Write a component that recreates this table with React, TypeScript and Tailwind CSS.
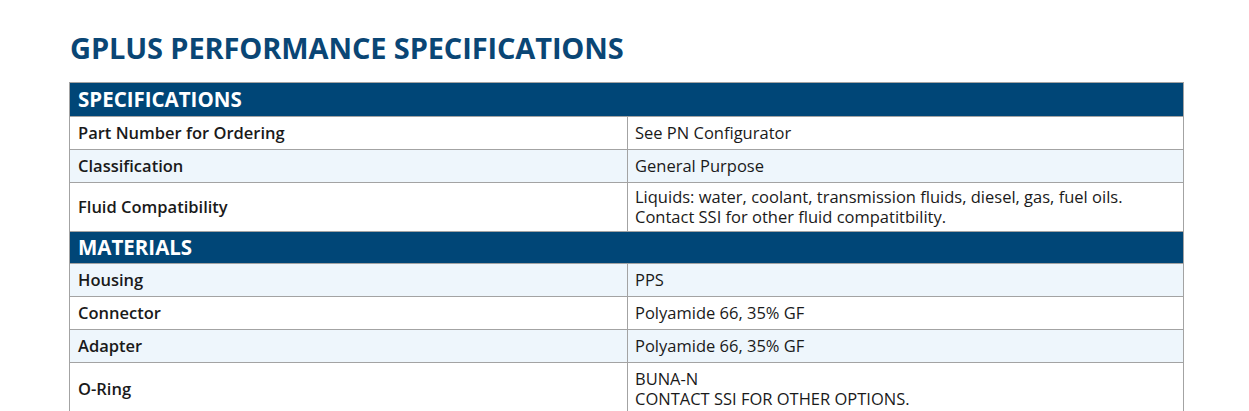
import React from "react";

type Row = { label: string; value: string[]; shaded?: boolean; pad?: string };

const sections: { title: string; bar: string; rows: Row[] }[] = [
  {
    title: "SPECIFICATIONS",
    bar: "h-[34px]",
    rows: [
      { label: "Part Number for Ordering", value: ["See PN Configurator"] },
      { label: "Classification", value: ["General Purpose"], shaded: true },
      {
        label: "Fluid Compatibility",
        value: [
          "Liquids: water, coolant, transmission fluids, diesel, gas, fuel oils.",
          "Contact SSI for other fluid compatitbility.",
        ],
      },
    ],
  },
  {
    title: "MATERIALS",
    bar: "h-[32px]",
    rows: [
      { label: "Housing", value: ["PPS"], shaded: true },
      { label: "Connector", value: ["Polyamide 66, 35% GF"] },
      { label: "Adapter", value: ["Polyamide 66, 35% GF"], shaded: true },
      {
        label: "O-Ring",
        value: ["BUNA-N", "CONTACT SSI FOR OTHER OPTIONS."],
        pad: "pt-[6px] pb-[6px]",
      },
    ],
  },
];

export default function App() {
  return (
    <div
      className="bg-white w-[1249px] h-[411px] overflow-hidden pl-[69px] pt-[30px]"
      style={{ fontFamily: '"Open Sans", "Liberation Sans", sans-serif' }}
    >
      <h1 className="text-[29px] leading-[36px] font-bold text-[#0a4675] tracking-[-0.12px] pl-px">
        GPLUS PERFORMANCE SPECIFICATIONS
      </h1>
      <div className="mt-[16px] w-[1115px] border-l border-r border-[#a3a3a3]">
        {sections.map((section) => (
          <div key={section.title}>
            <div
              className={
                "bg-[#004677] border-t border-[#a3a3a3] flex items-center pl-[8px] " +
                section.bar
              }
            >
              <span className="text-white font-bold text-[20.5px]">
                {section.title}
              </span>
            </div>
            {section.rows.map((row) => (
              <div
                key={row.label}
                className={
                  "grid grid-cols-[557px_1fr] border-t border-[#a3a3a3] text-[16.5px] text-[#1a1a1a] " +
                  (row.shaded ? "bg-[#eef6fc]" : "bg-white")
                }
              >
                <div className="flex items-center px-[8px] min-h-[32px] font-semibold">
                  {row.label}
                </div>
                <div
                  className={
                    "flex flex-col justify-center px-[7px] min-h-[32px] border-l border-[#a3a3a3] leading-[20px] " +
                    (row.pad ?? "py-[4px]")
                  }
                >
                  {row.value.map((v) => (
                    <span key={v}>{v}</span>
                  ))}
                </div>
              </div>
            ))}
          </div>
        ))}
      </div>
    </div>
  );
}
